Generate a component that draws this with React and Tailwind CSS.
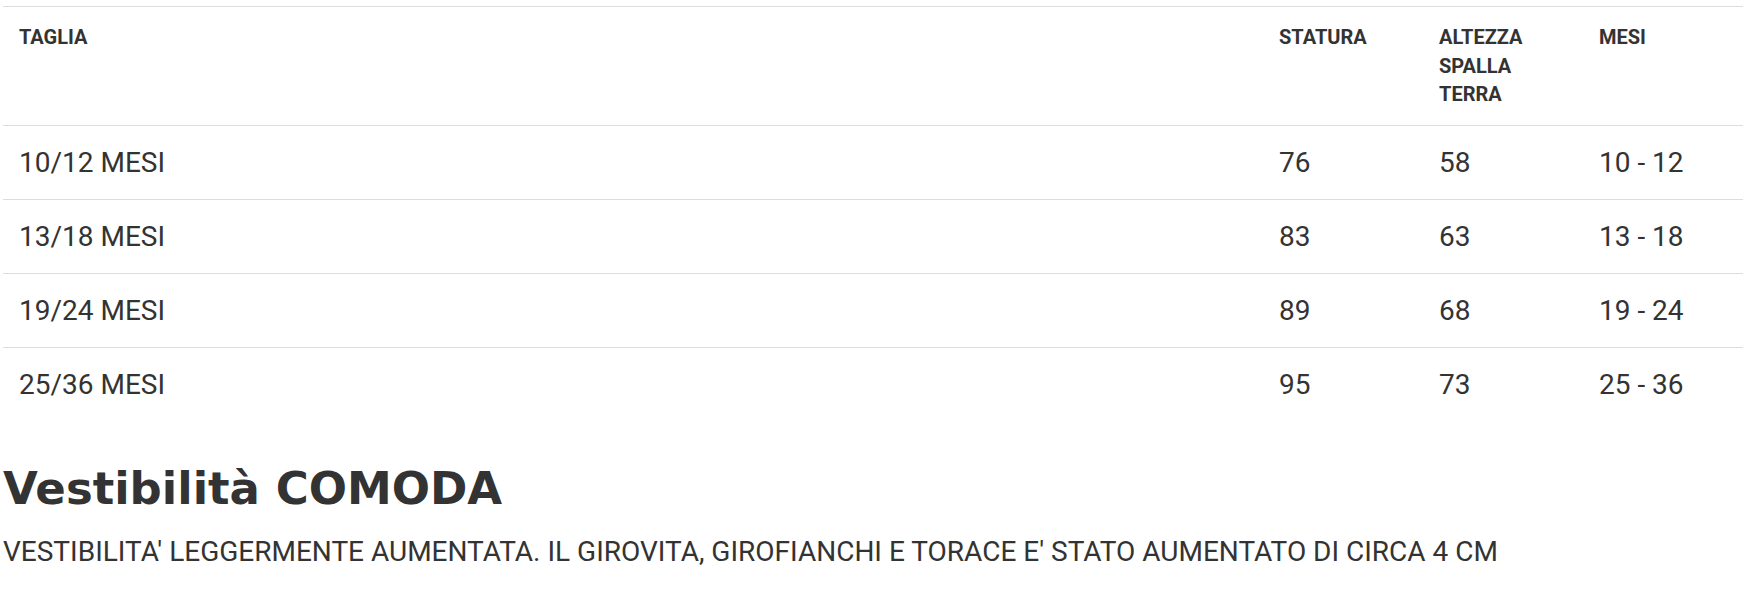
import React from 'react';

const rows = [
  ['10/12 MESI', '76', '58', '10 - 12'],
  ['13/18 MESI', '83', '63', '13 - 18'],
  ['19/24 MESI', '89', '68', '19 - 24'],
  ['25/36 MESI', '95', '73', '25 - 36'],
];

const SizeTable = () => (
  <table className="w-full border-collapse table-fixed">
    <colgroup>
      <col />
      <col className="w-[160px]" />
      <col className="w-[160px]" />
      <col className="w-[160px]" />
    </colgroup>
    <thead>
      <tr className="border-t border-[#dddddd]">
        {['TAGLIA', 'STATURA', 'ALTEZZA SPALLA TERRA', 'MESI'].map((h) => (
          <th
            key={h}
            className="p-4 text-left align-top text-[20px] leading-[1.43] font-bold text-[#333333]"
          >
            {h}
          </th>
        ))}
      </tr>
    </thead>
    <tbody>
      {rows.map((r) => (
        <tr key={r[0]} className="border-t border-[#dddddd]">
          {r.map((c, i) => (
            <td key={i} className="p-4 text-[28px] leading-[41px] text-[#333333]">
              {c}
            </td>
          ))}
        </tr>
      ))}
    </tbody>
  </table>
);

export default function App() {
  return (
    <div className="bg-white px-[3px] pt-[6px] font-['Roboto','Liberation_Sans',sans-serif]">
      <SizeTable />
      <h2 className="mt-[41px] text-[45px] leading-[1.2] font-bold text-[#333333] font-['DejaVu_Sans',sans-serif]">
        Vestibilità COMODA
      </h2>
      <p className="mt-[16px] text-[28px] leading-[1.43] text-[#333333]">
        VESTIBILITA' LEGGERMENTE AUMENTATA. IL GIROVITA, GIROFIANCHI E TORACE E' STATO AUMENTATO DI CIRCA 4 CM
      </p>
    </div>
  );
}
